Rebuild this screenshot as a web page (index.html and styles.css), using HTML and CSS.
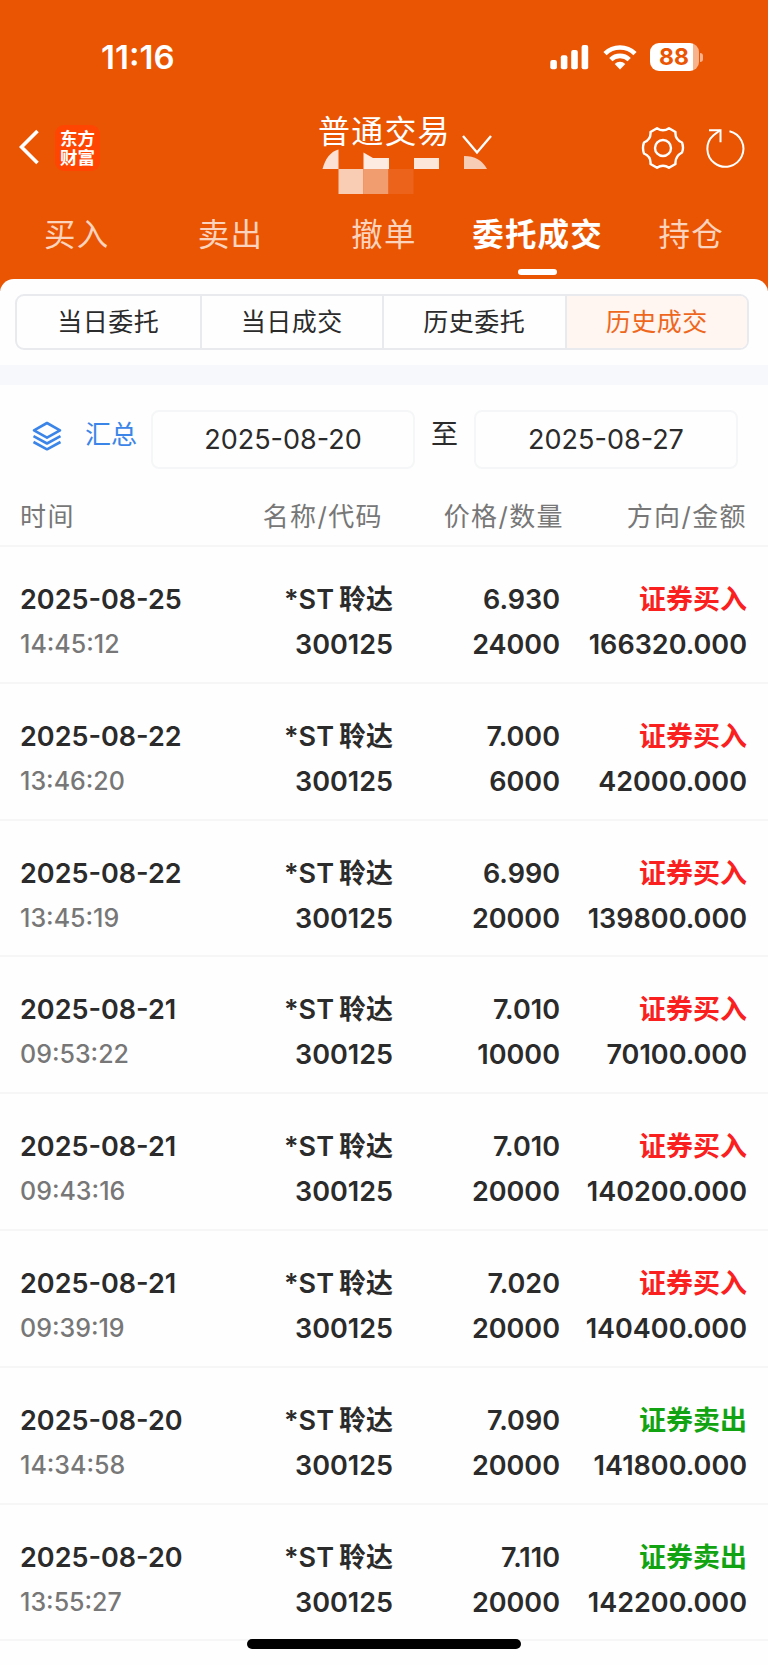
FILE: index.html
```html
<!DOCTYPE html>
<html lang="zh-CN">
<head>
  <meta charset="UTF-8">
  <meta name="viewport" content="width=device-width, initial-scale=1.0">
  <title>普通交易 - 历史成交</title>
  <link rel="stylesheet" href="styles.css">
</head>
<body>
  <header class="header">
    <div class="status">
      <span class="clock">11:16</span>
      <div class="status-icons">
        <svg class="signal" width="39" height="26" viewBox="0 0 39 26" fill="#fff">
          <rect x="0.3" y="16" width="6.6" height="9.3" rx="2"/>
          <rect x="10.8" y="11.3" width="6.6" height="14" rx="2"/>
          <rect x="21.2" y="6" width="6.6" height="19.3" rx="2"/>
          <rect x="31.6" y="1" width="6.6" height="24.3" rx="2"/>
        </svg>
        <svg class="wifi" width="34" height="26" viewBox="0 0 34 26" fill="none" stroke="#fff" stroke-width="4.6">
          <path d="M2 9.6a21.5 21.5 0 0 1 30 0"/>
          <path d="M7.8 15.6a13.2 13.2 0 0 1 18.4 0"/>
          <path d="M17 25.4l-5.3-5.5a7.6 7.6 0 0 1 10.6 0z" fill="#fff" stroke="none"/>
        </svg>
        <div class="battery"><span>88</span></div>
        <i class="nub"></i>
      </div>
    </div>

    <div class="nav">
      <div class="nav-left">
        <svg width="20" height="36" viewBox="0 0 20 36" fill="none" stroke="#fff" stroke-width="3.6">
          <path d="M18.5 2L2.5 18l16 16"/>
        </svg>
        <div class="logo">东方<br>财富</div>
      </div>
      <div class="nav-title">
        <h1>普通交易</h1>
        <svg class="arrow" width="32" height="21" viewBox="0 0 32 21" fill="none" stroke="#fff" stroke-width="2.4">
          <path d="M2 2l14 16.500L30 2"/>
        </svg>
        <svg class="mask" width="170" height="48" viewBox="0 0 170 48">
          <path d="M4.500 21Q9 4.500 20.500 1.500V21z" fill="#fbe0d3"/>
          <path d="M45.500 4.500L55 10h16v11H45.500z" fill="#fdeae0"/>
          <path d="M96 10h25v11H96z" fill="#fce6da"/>
          <path d="M146 8q16 0 23 13h-23z" fill="#f8cdb6"/>
          <path d="M20.500 21h25v25h-25z" fill="#f9cdb4"/>
          <path d="M45.500 21h25v25h-25z" fill="#f29d6f"/>
          <path d="M70.500 21h25v25h-25z" fill="#ec641c"/>
        </svg>
      </div>
      <div class="nav-right">
        <svg width="44" height="44" viewBox="0 0 44 44" fill="none" stroke="#fff" stroke-width="2.400" stroke-linejoin="round">
          <path d="M16 2.200Q22 6.500 28 2.200L34.500 6Q33.800 13.500 41 16.500Q43 22 41 26.500Q33.800 30.500 34.500 38L28 41.800Q22 37.500 16 41.800L9.500 38Q10.200 30.500 3 27.500Q1 22 3 16.500Q10.200 13.500 9.500 6z"/>
          <circle cx="22" cy="22" r="8"/>
        </svg>
        <svg width="40" height="40" viewBox="0 0 40 40" fill="none" stroke="#fff" stroke-width="2">
          <path d="M24.500 3.200A18 18 0 1 1 8.500 7.200L15 2.200"/>
          <path d="M4 2.200h11.500v12"/>
        </svg>
      </div>
    </div>

    <nav class="tabs">
      <a>买入</a>
      <a>卖出</a>
      <a>撤单</a>
      <a class="active">委托成交</a>
      <a>持仓</a>
    </nav>
  </header>

  <main class="panel">
    <div class="segments">
      <span>当日委托</span>
      <span>当日成交</span>
      <span>历史委托</span>
      <span class="active">历史成交</span>
    </div>
    <div class="band"></div>

    <div class="filter">
      <svg width="30" height="30" viewBox="0 0 30 30" fill="none" stroke="#3c85e8" stroke-width="2.600" stroke-linejoin="round">
        <path d="M15 2l13 7.300-13 7.300L2 9.300z"/>
        <path d="M1.500 15.200L15 22.500l13.500-7.300"/>
        <path d="M1.500 21L15 28.300 28.500 21"/>
      </svg>
      <span class="summary">汇总</span>
      <span class="date">2025-08-20</span>
      <span class="to">至</span>
      <span class="date">2025-08-27</span>
    </div>

    <div class="thead">
      <span>时间</span>
      <span>名称/代码</span>
      <span>价格/数量</span>
      <span>方向/金额</span>
    </div>

    <div class="row">
      <div>2025-08-25<small>14:45:12</small></div>
      <div>*ST<b>聆达</b><br>300125</div>
      <div>6.930<br>24000</div>
      <div><em class="buy">证券买入</em><br>166320.000</div>
    </div>
    <div class="row">
      <div>2025-08-22<small>13:46:20</small></div>
      <div>*ST<b>聆达</b><br>300125</div>
      <div>7.000<br>6000</div>
      <div><em class="buy">证券买入</em><br>42000.000</div>
    </div>
    <div class="row">
      <div>2025-08-22<small>13:45:19</small></div>
      <div>*ST<b>聆达</b><br>300125</div>
      <div>6.990<br>20000</div>
      <div><em class="buy">证券买入</em><br>139800.000</div>
    </div>
    <div class="row">
      <div>2025-08-21<small>09:53:22</small></div>
      <div>*ST<b>聆达</b><br>300125</div>
      <div>7.010<br>10000</div>
      <div><em class="buy">证券买入</em><br>70100.000</div>
    </div>
    <div class="row">
      <div>2025-08-21<small>09:43:16</small></div>
      <div>*ST<b>聆达</b><br>300125</div>
      <div>7.010<br>20000</div>
      <div><em class="buy">证券买入</em><br>140200.000</div>
    </div>
    <div class="row">
      <div>2025-08-21<small>09:39:19</small></div>
      <div>*ST<b>聆达</b><br>300125</div>
      <div>7.020<br>20000</div>
      <div><em class="buy">证券买入</em><br>140400.000</div>
    </div>
    <div class="row">
      <div>2025-08-20<small>14:34:58</small></div>
      <div>*ST<b>聆达</b><br>300125</div>
      <div>7.090<br>20000</div>
      <div><em class="sell">证券卖出</em><br>141800.000</div>
    </div>
    <div class="row">
      <div>2025-08-20<small>13:55:27</small></div>
      <div>*ST<b>聆达</b><br>300125</div>
      <div>7.110<br>20000</div>
      <div><em class="sell">证券卖出</em><br>142200.000</div>
    </div>
  </main>

  <div class="home-bar"></div>
</body>
</html>
```
FILE: styles.css
```css
* {
  box-sizing: border-box;
}
body {
  margin: 0;
  width: 768px;
  height: 1665px;
  overflow: hidden;
  position: relative;
  background: #fefefe;
  color: #2b2b2b;
  font-family: Inter, "Noto Sans CJK SC", sans-serif;
}
svg {
  display: block;
  flex: none;
}

/* header */
.header {
  height: 291px;
  background: #ea5504;
  color: #fff;
}
.status {
  height: 114px;
  display: flex;
  justify-content: space-between;
  padding: 0 65px 0 101px;
}
.clock {
  font-size: 33px;
  font-weight: 600;
  line-height: 40px;
  margin-top: 37px;
}
.status-icons {
  display: flex;
  align-items: center;
  height: 28px;
  margin-top: 43px;
}
.wifi {
  margin-left: 14px;
}
.battery {
  width: 49px;
  height: 28px;
  margin-left: 13px;
  border-radius: 9px;
  background: linear-gradient(to right, #fff 43px, #f6b38c 43px);
  color: #ea5504;
  font-size: 23px;
  font-weight: 700;
  line-height: 28px;
  padding-left: 9px;
}
.nub {
  width: 3px;
  height: 9px;
  margin-left: 1px;
  border-radius: 0 4px 4px 0;
  background: #f6b38c;
}
.nav {
  height: 88px;
  display: grid;
  grid-template-columns: 318px 1fr 127px;
}
.nav-left {
  display: flex;
  align-items: flex-start;
  padding: 11px 0 0 19px;
  gap: 16px;
}
.nav-left svg {
  margin-top: 4px;
}
.logo {
  width: 45px;
  height: 46px;
  border-radius: 9px;
  background: #ff4502;
  font-family: "Noto Sans CJK SC", sans-serif;
  font-size: 17.5px;
  font-weight: 700;
  line-height: 19px;
  text-align: center;
  padding-top: 3px;
}
.nav-title {
  position: relative;
  display: flex;
  align-items: flex-start;
}
.nav-title h1 {
  margin: 0;
  font-size: 32px;
  font-weight: 400;
  letter-spacing: 1.2px;
  line-height: 36px;
}
.arrow {
  margin: 20px 0 0 10px;
}
.mask {
  position: absolute;
  left: 0;
  top: 34px;
}
.nav-right {
  display: flex;
  align-items: flex-start;
  gap: 20px;
  padding-top: 12px;
}
.nav-right svg + svg {
  margin-top: 2px;
}
.tabs {
  display: grid;
  grid-template-columns: repeat(5, 1fr);
  text-align: center;
  font-size: 31.5px;
  letter-spacing: 1.2px;
  line-height: 66px;
}
.tabs a {
  color: #fcd3bd;
}
.tabs .active {
  color: #fff;
  font-weight: 700;
}
.tabs .active::after {
  content: "";
  display: block;
  width: 39px;
  height: 6px;
  margin: 1px auto 0;
  border-radius: 3px;
  background: #fff;
}

/* white panel */
.panel {
  position: relative;
  margin-top: -12px;
  padding-top: 15px;
  border-radius: 14px 14px 0 0;
  background: #fefefe;
}
.segments {
  display: grid;
  grid-template-columns: repeat(4, 1fr);
  height: 56px;
  margin: 0 19px 0 15px;
  border: 2px solid #e8eaee;
  border-radius: 9px;
  overflow: hidden;
  text-align: center;
  font-size: 25px;
  letter-spacing: 0.5px;
  line-height: 52px;
}
.segments span + span {
  border-left: 2px solid #e8eaee;
}
.segments .active {
  background: #fff5f1;
  color: #ee671c;
}
.band {
  height: 20px;
  margin-top: 15px;
  background: #f6f8fb;
}
.filter {
  display: flex;
  align-items: flex-start;
  height: 109px;
  padding: 25px 30px 0 32px;
}
.filter svg {
  margin-top: 11px;
}
.summary {
  width: 66px;
  margin-left: 23px;
  color: #3c85e8;
  font-size: 26px;
  line-height: 50px;
}
.date {
  width: 264px;
  height: 59px;
  border: 2px solid #f5f6f7;
  border-radius: 8px;
  text-align: center;
  font-size: 27px;
  line-height: 56px;
}
.to {
  width: 59px;
  text-align: center;
  font-size: 27px;
  line-height: 50px;
}

/* list */
.thead,
.row {
  display: grid;
  grid-template-columns: 180px 193px 167px 187px;
  padding-left: 20px;
  border-bottom: 2px solid #f6f6f7;
  text-align: right;
}
.thead {
  height: 53px;
  color: #777;
  font-size: 26px;
  letter-spacing: 1.4px;
  line-height: 46px;
}
.thead span:nth-child(2) {
  margin-right: 10px;
}
.thead span:nth-child(3) {
  margin-right: -4px;
}
.thead span:first-child,
.row div:first-child {
  text-align: left;
}
.row {
  height: 136.8px;
  padding-top: 30px;
  font-size: 27px;
  font-weight: 600;
  line-height: 45px;
  white-space: nowrap;
}
.row small {
  display: block;
  color: #777;
  font-size: 25px;
  font-weight: 500;
}
.row b {
  font-weight: 600;
  margin-left: 5px;
}
.row em {
  font-style: normal;
  font-weight: 700;
}
.buy {
  color: #fb2020;
}
.sell {
  color: #12a312;
}
.home-bar {
  position: absolute;
  left: 247px;
  top: 1639px;
  width: 274px;
  height: 10px;
  border-radius: 5px;
  background: #000;
}
```
